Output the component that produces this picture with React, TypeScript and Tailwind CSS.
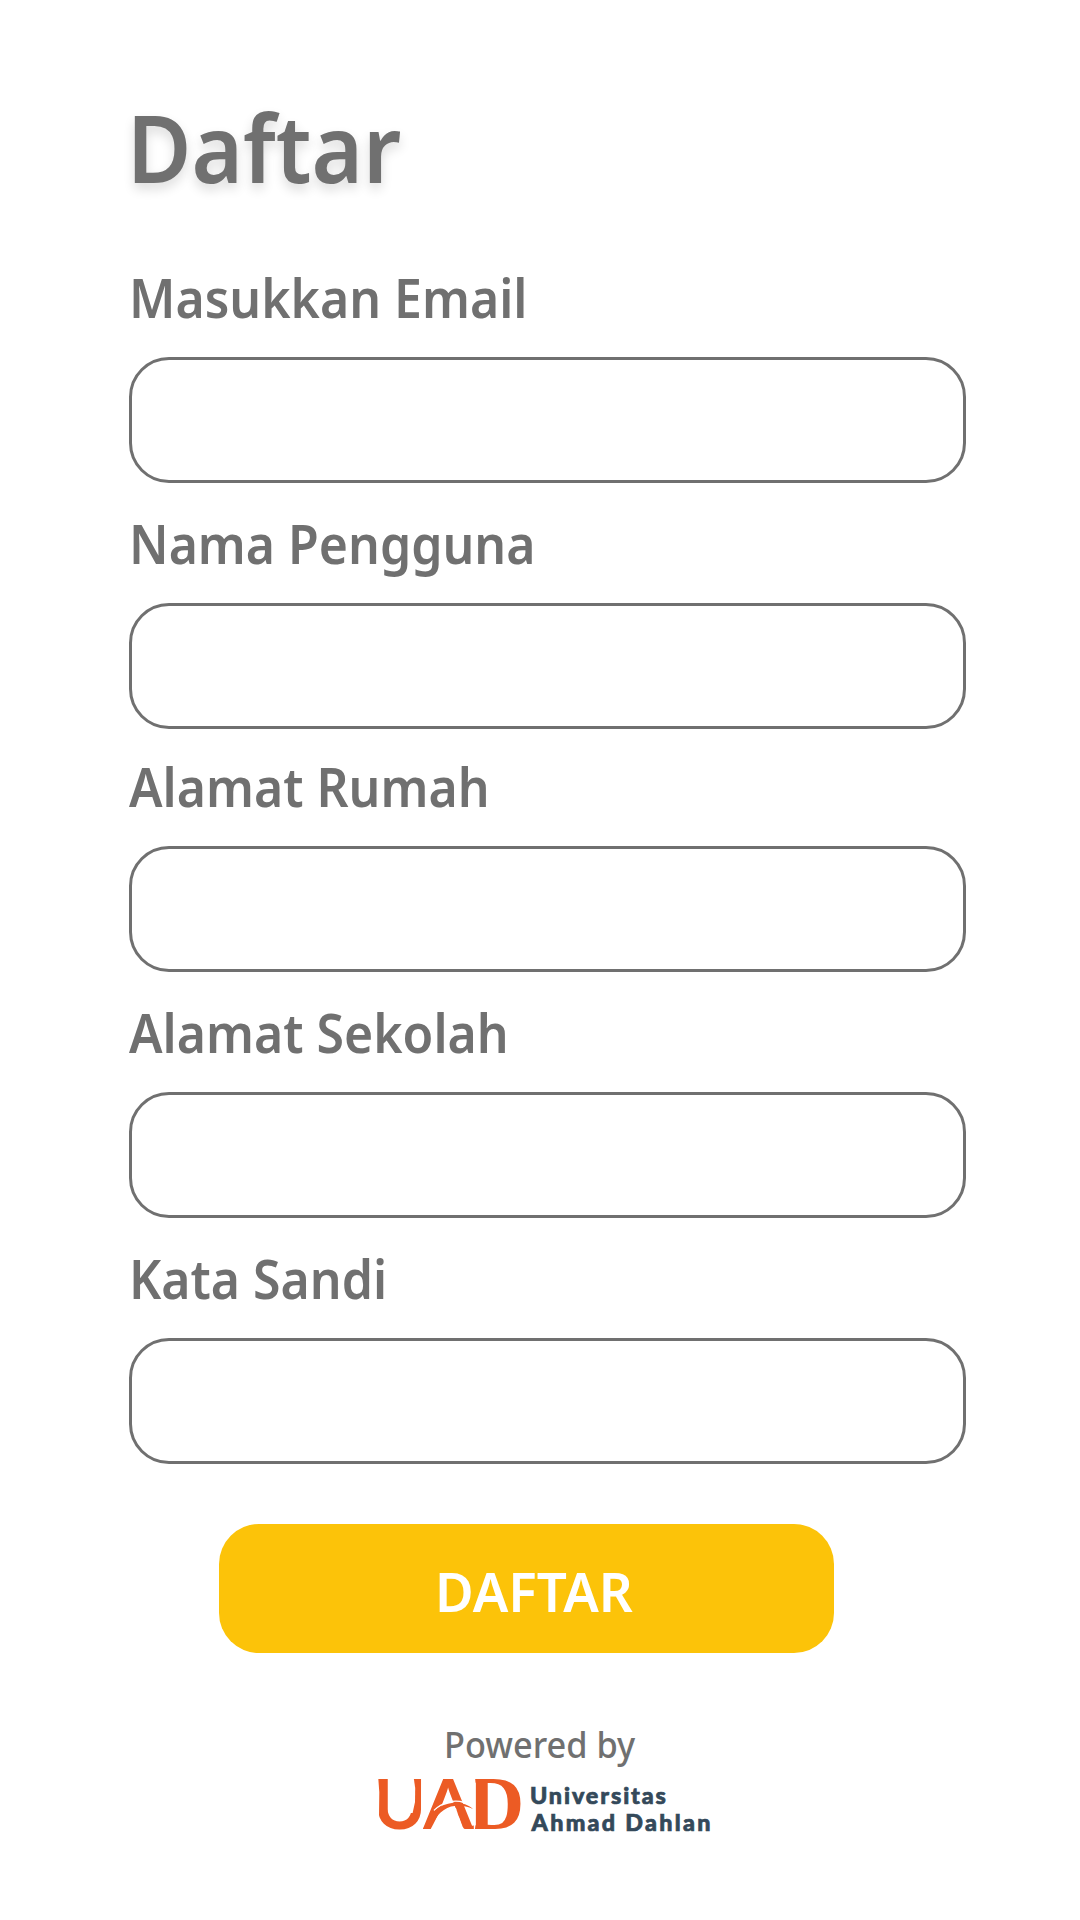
const fields = [
  { label: "Masukkan Email", gap: "mb-[33px]" },
  { label: "Nama Pengguna", gap: "mb-[30px]" },
  { label: "Alamat Rumah", gap: "mb-[33px]" },
  { label: "Alamat Sekolah", gap: "mb-[33px]" },
  { label: "Kata Sandi", gap: "mb-[60px]" },
];

function UadLogo() {
  return (
    <svg className="-mt-[8px] ml-[241px] block overflow-visible" width="360" height="92" viewBox="0 -18 360 92" role="img" aria-label="UAD Universitas Ahmad Dahlan">
      <defs>
        <clipPath id="edge">
          <path d="M7.7 0 H52.4 L51.3 20 V60 H8.8 L9.3 20 Z M52.5 0 H86 L103.8 46 V60 H52.5 Z M104.6 0 H153 V60 H104.6 L105.6 52 V12 Z" />
        </clipPath>
      </defs>
      <g clipPath="url(#edge)">
        <text transform="translate(0 57) scale(1.03 1)" fill="#ec5b24" fontFamily="Lato, sans-serif" fontWeight="700" fontSize="69.5">
          <tspan x="2.9">U</tspan>
          <tspan x="51.8">A</tspan>
          <tspan x="94.8" fontFamily="'Liberation Serif', serif" fontSize="76">D</tspan>
        </text>
      </g>
      {/* slimmer right stem of the U */}
      <path d="M40 5 L43.6 5 L45.2 16 L45 30 L42.6 41 L40 41 Z" fill="#fff" />
      {/* opening below the swoosh that stands in for the crossbar of the A */}
      <path d="M60.2 58 L66.5 46 L72 36 H85.9 L88.8 44.7 L93.1 58 Z" fill="#fff" />
      <path d="M64 38.5 C72 30.5 84 27 94 30.5" fill="none" stroke="#fff" strokeWidth="1.4" />
      <path d="M53.2 57 L60.2 57 C64.5 46 70.5 38 81 34.6 C88 32.8 96 33.8 103 37 C94 28.8 78 28.2 66 37.5 L61 42 Z" fill="#ec5b24" />
      <g fill="#34495a" stroke="#34495a" strokeWidth=".7" fontFamily="Lato, sans-serif" fontWeight="900" fontSize="23.3">
        <text x="160" y="32" letterSpacing="1.9">Universitas</text>
        <text x="161.5" y="58.5" letterSpacing="2.3">Ahmad Dahlan</text>
      </g>
    </svg>
  );
}

export default function App() {
  return (
    <main className="flex h-[1920px] w-[1080px] flex-col items-start overflow-hidden bg-white pl-[129px] pt-[100px] font-['Noto_Sans',sans-serif] font-semibold text-[#707070]">
      <h1 className="-ml-[2px] mb-[77px] origin-left scale-x-[.943] text-[93.4px] leading-[94px] [text-shadow:0_6px_12px_rgba(0,0,0,0.14)]">
        Daftar
      </h1>
      {fields.map((f) => (
        <label key={f.label} className={`flex flex-col items-start ${f.gap}`}>
          <span className="mb-[32px] origin-left scale-x-[.936] whitespace-nowrap text-[53.4px] leading-[54px]">{f.label}</span>
          <input className="h-[126px] w-[837px] rounded-[40px] border-3 border-[#707070] bg-white px-8 text-[40px] outline-none" />
          <span className="h-px" />
        </label>
      ))}
      <button className="-mt-px ml-[90px] flex h-[129px] w-[615px] items-start rounded-[40px] bg-[#fcc309] pl-[216px] pt-[41px] text-white">
        <span className="origin-left scale-x-[.992] text-[53.4px] leading-[54px]">DAFTAR</span>
      </button>
      <p className="ml-[315px] mt-[73px] origin-left scale-x-[.965] text-[35.6px] font-medium leading-[36px]">Powered by</p>
      <UadLogo />
    </main>
  );
}
